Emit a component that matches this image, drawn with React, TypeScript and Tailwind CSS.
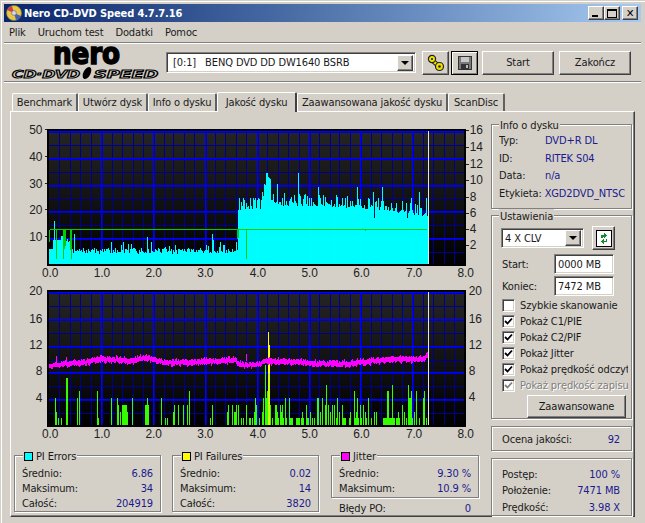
import React from 'react';

const font = "font-['DejaVu_Sans_Condensed','Liberation_Sans',Arial,sans-serif]";
const etched = 'border border-[#808080] shadow-[inset_1px_1px_0_#fff,1px_1px_0_#fff]';
const raised =
  'border border-t-white border-l-white border-r-[#404040] border-b-[#404040] shadow-[inset_-1px_-1px_0_#808080] bg-[#d4d0c8]';
const sunken =
  'border border-t-[#808080] border-l-[#808080] border-r-white border-b-white shadow-[inset_1px_1px_0_#404040,inset_-1px_-1px_0_#d4d0c8] bg-white';
const valueColor = 'text-[#1a1a8e]';

// seeded noise so the chart stays the same on every render
function makeNoise(seed: number) {
  let s = seed;
  return () => {
    s = (s * 1664525 + 1013904223) % 4294967296;
    return s / 4294967296;
  };
}

function lerp(points: number[][], x: number) {
  for (let i = 1; i < points.length; i++) {
    if (x <= points[i][0]) {
      const [x0, y0] = points[i - 1];
      const [x1, y1] = points[i];
      return y0 + ((y1 - y0) * (x - x0)) / (x1 - x0);
    }
  }
  return points[points.length - 1][1];
}

const plotLeft = 46;
const plotRight = 466;
const xAt = (v: number) => 48 + 52.2 * v;

function Grid({ id, top, bottom, step }: { id: string; top: number; bottom: number; step: number }) {
  const rows: React.ReactNode[] = [];
  for (let i = 0; top + i * step < bottom; i++) {
    const y = Math.round(top + i * step);
    rows.push(
      <line key={i} x1={plotLeft} x2={plotRight} y1={y + 0.5} y2={y + 0.5} stroke={i % 2 === 0 ? '#0000ff' : '#000090'} strokeWidth={1} />,
    );
    if (i % 2 === 0)
      rows.push(<line key={'b' + i} x1={plotLeft} x2={plotRight} y1={y + 1.5} y2={y + 1.5} stroke="#0000d0" strokeWidth={1} />);
  }
  const cols: React.ReactNode[] = [];
  for (let i = 1; i < 40; i++) {
    const x = Math.round(xAt(i * 0.2));
    cols.push(
      <line key={i} x1={x + 0.5} x2={x + 0.5} y1={top} y2={bottom} stroke={i % 5 === 0 ? '#0000ff' : '#000090'} strokeWidth={1} />,
    );
    if (i % 5 === 0)
      cols.push(<line key={'b' + i} x1={x + 1.5} x2={x + 1.5} y1={top} y2={bottom} stroke="#0000c0" strokeWidth={1} />);
  }
  return (
    <g shapeRendering="crispEdges">
      <defs>
        <linearGradient id={id} x1="0" y1="0" x2="0" y2="1">
          <stop offset="0" stopColor="#252525" />
          <stop offset="1" stopColor="#000000" />
        </linearGradient>
      </defs>
      <rect x={plotLeft} y={top - 1} width={plotRight - plotLeft + 1} height={bottom - top + 2} fill={`url(#${id})`} />
      {cols}
      {rows}
      <rect x={plotLeft} y={top - 2} width={plotRight - plotLeft + 1} height={2} fill="#000" />
      <rect x={plotLeft} y={top} width={2} height={bottom - top} fill="#000" />
      <rect x={plotRight - 1} y={top} width={2} height={bottom - top} fill="#000" />
      <rect x={plotLeft} y={bottom - 1} width={plotRight - plotLeft + 1} height={1} fill="#000" />
    </g>
  );
}

const xLabels = ['0.0', '1.0', '2.0', '3.0', '4.0', '5.0', '6.0', '7.0', '8.0'];
const xLabelPos = [49, 101, 153, 205, 258, 310, 362, 415, 467];

function XLabels({ y }: { y: number }) {
  return (
    <g fontSize={12} fill="#222" fontFamily="'Liberation Sans', Arial, sans-serif" textAnchor="middle">
      {xLabels.map((t, i) => (
        <text key={t} x={xLabelPos[i]} y={y}>
          {t}
        </text>
      ))}
    </g>
  );
}

// cyan PI errors columns, page pixels
const errorSpikes: Record<number, number> = {
  53: 16, 56: 9, 62: 12, 63: 13, 73: 11, 110: 8, 122: 8, 146: 10, 150: 8, 212: 11, 213: 9, 220: 8, 236: 8,
  243: 25, 244: 24, 246: 23, 250: 25, 254: 24, 255: 25, 258: 25, 261: 24, 298: 34, 277: 30, 282: 25, 311: 25,
  318: 29, 319: 26, 320: 25, 343: 25, 358: 29, 369: 25, 374: 27, 383: 29, 412: 25, 420: 27, 427: 25, 392: 23, 397: 23,
};

function errorsPath() {
  const rnd = makeNoise(7);
  let d = '';
  for (let x = 48; x < 430; x++) {
    let v: number;
    if (x < 52) v = 5.5;
    else if (x < 60) v = 9;
    else if (x < 65) v = 10.5;
    else if (x < 72) v = 8 - (x - 65) * 0.5 + rnd() * 2;
    else if (x < 238) v = 3.8 + rnd() * 2 + (rnd() > 0.85 ? 1.6 : 0);
    else {
      const base = lerp([[238, 21], [260, 21], [262, 24], [264, 28], [266, 31], [268, 33], [270, 32], [271, 25], [275, 23], [340, 22], [385, 21], [400, 20], [415, 19], [429, 18]], x);
      v = base + rnd() * 2.2 - 1.2 + (rnd() > 0.72 ? 3 : 0);
    }
    if (errorSpikes[x]) v = errorSpikes[x];
    if (x === 375 || x === 408) v = 17;
    d += `M${x + 0.5} ${Math.round(265 - v * 2.7)}V265`;
  }
  return d;
}

function ChartOne() {
  const leftLabels: [string, number][] = [['50', 134], ['40', 161], ['30', 188], ['20', 215], ['10', 242]];
  const rightLabels: [string, number][] = [['16', 134], ['14', 151], ['12', 168], ['10', 184], ['8', 201], ['6', 218], ['4', 234], ['2', 250]];
  return (
    <svg viewBox="11 122 479 163" width={479} height={163} className="block">
      <Grid id="bg1" top={131} bottom={266} step={13.5} />
      <path d={errorsPath()} stroke="#00ffff" strokeWidth={1} shapeRendering="crispEdges" />
      <g stroke="#00d000" strokeWidth={1} fill="none" shapeRendering="crispEdges">
        <path d="M48.5 243V230.5H428M55.5 230V260M62.5 230V260M63.5 230V250M64.5 230V247M69.5 230V251M70.5 230V260M237.5 230V240M238.5 230V239M246.5 230V260M366.5 230V232" />
      </g>
      <path d="M429.5 131V265" stroke="#e8e8e8" strokeWidth={1} shapeRendering="crispEdges" />
      <g stroke="#222" shapeRendering="crispEdges">
        {leftLabels.map(([, y]) => (
          <line key={y} x1={44} x2={46} y1={y - 4.5} y2={y - 4.5} />
        ))}
        {rightLabels.map(([, y]) => (
          <line key={y} x1={467} x2={470} y1={y - 3.5} y2={y - 3.5} />
        ))}
      </g>
      <g fontSize={12} fill="#222" fontFamily="'Liberation Sans', Arial, sans-serif">
        {leftLabels.map(([t, y]) => (
          <text key={t} x={41} y={y} textAnchor="end">
            {t}
          </text>
        ))}
        {rightLabels.map(([t, y]) => (
          <text key={t} x={471} y={y}>
            {t}
          </text>
        ))}
      </g>
      <XLabels y={278} />
    </svg>
  );
}

// green PI failures as [x, value] in page pixels
const failureBars: number[][] = [
  [54, 4], [55, 2], [57, 1], [60, 1], [65, 7], [66, 7], [76, 4], [78, 5], [96, 5], [97, 1], [110, 4], [116, 4], [117, 3], [119, 2],
  [121, 3], [122, 3], [123, 3], [124, 3], [125, 3], [126, 2], [131, 4], [144, 3], [145, 3], [146, 4], [147, 3], [160, 4], [164, 1], [166, 1],
  [173, 2], [174, 3], [178, 3], [183, 3], [187, 3], [189, 5], [210, 1], [212, 3], [227, 2], [228, 3], [232, 3], [234, 2], [235, 2], [236, 3],
  [238, 3], [241, 1], [243, 1], [246, 3], [249, 1], [250, 1], [252, 1], [254, 2], [255, 4], [256, 3], [259, 1], [262, 2], [263, 4], [265, 9],
  [266, 4], [267, 5], [268, 5], [269, 5], [270, 3], [272, 1], [275, 3], [276, 3], [277, 2], [278, 1], [280, 3], [281, 2], [282, 3], [283, 1],
  [285, 4], [286, 1], [289, 4], [290, 1], [291, 1], [292, 1], [296, 1], [297, 1], [298, 1], [299, 1], [301, 1], [302, 2], [303, 1], [306, 3],
  [307, 1], [308, 1], [310, 2], [312, 1], [314, 1], [317, 4], [318, 4], [320, 2], [322, 4], [325, 3], [326, 6], [328, 3], [330, 2], [332, 3],
  [335, 3], [337, 1], [338, 4], [340, 2], [343, 3], [344, 1], [345, 1], [346, 1], [350, 1], [351, 2], [355, 5], [356, 1], [357, 2], [358, 4],
  [359, 1], [361, 3], [362, 1], [364, 3], [366, 2], [367, 1], [369, 4], [372, 1], [375, 2], [377, 2], [384, 1], [385, 1], [386, 1], [387, 1],
  [388, 5], [389, 5], [390, 1], [391, 1], [392, 1], [393, 6], [394, 1], [395, 1], [397, 1], [398, 1], [399, 2], [400, 1], [403, 3], [405, 2],
  [407, 1], [409, 6], [410, 4], [411, 4], [412, 5], [413, 1], [415, 2], [417, 5], [420, 1], [424, 4], [425, 5], [427, 1], [429, 4],
];

function jitterPath() {
  const rnd = makeNoise(21);
  const pts = [[48, 368], [60, 365], [80, 364], [100, 360], [130, 362], [145, 359], [165, 364], [200, 363], [235, 361], [239, 366], [258, 366], [265, 362], [300, 363], [320, 365], [350, 365], [370, 362], [395, 360], [425, 360], [428, 356]];
  let d = '';
  for (let x = 48; x < 429; x++) {
    const y = lerp(pts, x) + (rnd() - 0.5) * 2;
    const up = 2 + (rnd() > 0.8 ? 2 : rnd());
    const down = 2 + (rnd() > 0.8 ? 2 : rnd());
    d += `M${x + 0.5} ${Math.round(y - up)}V${Math.round(y + down)}`;
  }
  return d + 'M55.5 357V363M65.5 358V363M246.5 355V362';
}

function ChartTwo() {
  const leftLabels: [string, number][] = [['20', 296], ['16', 324], ['12', 350], ['8', 377], ['4', 404]];
  const rightLabels: [string, number][] = [['20', 296], ['16', 324], ['12', 350], ['8', 377], ['4', 403]];
  const bars = failureBars.map(([x, v]) => `M${x + 0.5} ${Math.round(427 - v * 6.75)}V427`).join('');
  return (
    <svg viewBox="11 285 479 162" width={479} height={162} className="block">
      <Grid id="bg2" top={293} bottom={428} step={13.5} />
      <path d={bars} stroke="#33ff00" strokeWidth={1} shapeRendering="crispEdges" />
      <path d="M268.5 333V427M269.5 346V427" stroke="#ccff00" strokeWidth={1} shapeRendering="crispEdges" />
      <path d="M268.5 333V375M269.5 346V375" stroke="#ffff00" strokeWidth={1} shapeRendering="crispEdges" />
      <path d={jitterPath()} stroke="#ff00ff" strokeWidth={1} shapeRendering="crispEdges" />
      <path d="M429.5 293V427" stroke="#e8e8e8" strokeWidth={1} shapeRendering="crispEdges" />
      <g fontSize={12} fill="#222" fontFamily="'Liberation Sans', Arial, sans-serif">
        {leftLabels.map(([t, y]) => (
          <text key={t} x={41} y={y} textAnchor="end">
            {t}
          </text>
        ))}
        {rightLabels.map(([t, y]) => (
          <text key={t} x={470} y={y}>
            {t}
          </text>
        ))}
      </g>
      <XLabels y={440} />
    </svg>
  );
}

function NeroIcon() {
  return (
    <svg width="16" height="16" viewBox="0 0 16 16">
      <circle cx="8" cy="8" r="7.5" fill="#e8c840" stroke="#8a7a40" strokeWidth="0.7" />
      <path d="M8 8L1 5A7.5 7.5 0 0 1 6 1Z" fill="#d04040" />
      <path d="M8 8L15 11A7.5 7.5 0 0 1 10 15Z" fill="#4060c0" />
      <circle cx="8" cy="8" r="2.4" fill="#d8d8e8" stroke="#606080" strokeWidth="0.6" />
    </svg>
  );
}

function ChainIcon() {
  return (
    <svg width="18" height="18" viewBox="0 0 18 18">
      <path d="M5.5 6.5L12 12.5" stroke="#222" strokeWidth="4.5" />
      <path d="M5.5 6.5L12 12.5" stroke="#f2e000" strokeWidth="2.5" />
      <circle cx="5" cy="5" r="3.6" fill="#f2e000" stroke="#222" strokeWidth="1.2" />
      <circle cx="12.5" cy="12.5" r="4" fill="#f2e000" stroke="#222" strokeWidth="1.2" />
      <circle cx="5" cy="5" r="1.1" fill="#222" />
      <circle cx="12.5" cy="12.5" r="1.3" fill="#222" />
    </svg>
  );
}

function FloppyIcon() {
  return (
    <svg width="14" height="14" viewBox="0 0 14 14" shapeRendering="crispEdges">
      <rect x="0.5" y="0.5" width="13" height="13" fill="#7a7a7a" stroke="#333" />
      <rect x="3" y="1" width="8" height="5" fill="#c8c8c8" />
      <rect x="3" y="8" width="8" height="5" fill="#333" />
      <rect x="8" y="9" width="2" height="3" fill="#bbb" />
    </svg>
  );
}

function RefreshIcon() {
  return (
    <svg width="16" height="17" viewBox="0 0 16 17" shapeRendering="crispEdges">
      <rect x="0.5" y="0.5" width="15" height="16" fill="#fff" stroke="#000" />
      <path d="M5 8V5H8V3L11 5.5L8 8V6.5H6.5V8Z" fill="#109030" />
      <path d="M11 9V12H8V14L5 11.5L8 9V10.5H9.5V9Z" fill="#109030" />
    </svg>
  );
}

function ComboArrow() {
  return (
    <div className={`w-[16px] h-[16px] flex items-center justify-center ${raised}`}>
      <div className="w-0 h-0 border-x-[4px] border-x-transparent border-t-[4px] border-t-black" />
    </div>
  );
}

function WinButton({ children }: { children: React.ReactNode }) {
  return <div className={`w-[16px] h-[14px] flex items-center justify-center ${raised}`}>{children}</div>;
}

function Tab({ w, label, active }: { w: string; label: string; active?: boolean }) {
  return active ? (
    <div className={`${w} h-[20px] -mb-px z-10 relative flex items-center justify-center whitespace-nowrap bg-[#d4d0c8] border-t border-l border-white border-r-2 border-r-[#404040] rounded-t-[2px]`}>
      {label}
    </div>
  ) : (
    <div className={`${w} h-[18px] flex items-center justify-center whitespace-nowrap border-t border-l border-white border-r-2 border-r-[#606060] rounded-t-[2px]`}>
      {label}
    </div>
  );
}

function Legend({ color, label }: { color?: string; label: string }) {
  return (
    <div className={`absolute -top-[7px] ${color ? 'left-[8px]' : 'left-[7px]'} flex items-center gap-[3px] bg-[#d4d0c8] px-[1px] h-[14px]`}>
      {color === 'cyan' && <span className="w-[9px] h-[9px] border border-black bg-[#00ffff]" />}
      {color === 'yellow' && <span className="w-[9px] h-[9px] border border-black bg-[#ffff00]" />}
      {color === 'magenta' && <span className="w-[9px] h-[9px] border border-black bg-[#ff00ff]" />}
      <span>{label}</span>
    </div>
  );
}

function StatRow({ label, value }: { label: string; value: string }) {
  return (
    <div className="flex justify-between h-[15px] items-center">
      <span>{label}</span>
      <span className={valueColor}>{value}</span>
    </div>
  );
}

function InfoRow({ label, value, x }: { label: string; value: string; x: string }) {
  return (
    <div className="flex h-[17.6px] items-center overflow-hidden whitespace-nowrap">
      <span className={x}>{label}</span>
      <span className={valueColor}>{value}</span>
    </div>
  );
}

function Check({ label, checked, disabled }: { label: string; checked?: boolean; disabled?: boolean }) {
  return (
    <div className="flex items-center gap-[5px] h-[16px] whitespace-nowrap overflow-hidden">
      <div className={`w-[13px] h-[13px] shrink-0 flex items-center justify-center ${sunken} ${disabled ? 'bg-[#d4d0c8]' : ''}`}>
        {checked && (
          <svg width="9" height="9" viewBox="0 0 9 9">
            <path d="M1 4L3.5 6.5L8 1.5" fill="none" stroke={disabled ? '#808080' : '#000'} strokeWidth="1.8" />
          </svg>
        )}
      </div>
      <span className={disabled ? 'text-[#808080] [text-shadow:1px_1px_0_#fff]' : ''}>{label}</span>
    </div>
  );
}

export default function App() {
  return (
    <div className={`${font} text-[11px] leading-none tracking-[-0.12px] text-[#1a1a1a] w-[645px] h-[523px] overflow-hidden bg-[#d4d0c8] px-[4px] pt-[4px] flex flex-col shadow-[inset_1px_1px_0_#d4d0c8,inset_2px_2px_0_#fff]`}>
      {/* title bar */}
      <div className="h-[18px] shrink-0 flex items-center pl-[2px] pr-[3px] bg-gradient-to-r from-[#0a246a] to-[#a6caf0]">
        <NeroIcon />
        <span className="ml-[2px] text-white font-bold text-[11px]">Nero CD-DVD Speed 4.7.7.16</span>
        <div className="ml-auto flex items-center">
          <WinButton>
            <div className="w-[6px] h-[2px] bg-black mt-[6px] -ml-[2px]" />
          </WinButton>
          <WinButton>
            <div className="w-[10px] h-[9px] border border-black border-t-2" />
          </WinButton>
          <div className="w-[2px]" />
          <WinButton>
            <span className="font-bold text-[11px] text-black">✕</span>
          </WinButton>
        </div>
      </div>

      {/* menu */}
      <div className="h-[20px] shrink-0 flex items-center pl-[5px] gap-[12px]">
        <span>Plik</span>
        <span>Uruchom test</span>
        <span>Dodatki</span>
        <span>Pomoc</span>
      </div>
      <div className="h-[2px] shrink-0 border-t border-[#808080] border-b border-b-white" />

      {/* toolbar */}
      <div className="h-[37px] shrink-0 flex items-center">
        <svg width="152" height="37" viewBox="0 0 152 37" className="ml-[8px] shrink-0 overflow-visible">
          <text x="41" y="20" fontFamily="'DejaVu Sans', sans-serif" fontWeight="700" fontSize="30" stroke="#000" strokeWidth="1.6" textLength="67" lengthAdjust="spacingAndGlyphs">
            nero
          </text>
          <text x="0" y="34" fontFamily="'DejaVu Sans', sans-serif" fontWeight="700" fontStyle="italic" fontSize="11" fill="#d4d0c8" stroke="#000" strokeWidth="1" textLength="68" lengthAdjust="spacingAndGlyphs">
            CD·DVD
          </text>
          <ellipse cx="75" cy="29" rx="3.5" ry="6.5" transform="rotate(28 75 29)" fill="#000" />
          <text x="82" y="34" fontFamily="'DejaVu Sans', sans-serif" fontWeight="700" fontStyle="italic" fontSize="11" fill="#d4d0c8" stroke="#000" strokeWidth="1" textLength="64" lengthAdjust="spacingAndGlyphs">
            SPEED
          </text>
        </svg>
        <div className={`ml-[2px] w-[250px] h-[21px] flex items-center justify-between pl-[6px] pr-[2px] ${sunken}`}>
          <span className="whitespace-pre">[0:1]   BENQ DVD DD DW1640 BSRB</span>
          <ComboArrow />
        </div>
        <div className={`ml-[6px] w-[27px] h-[24px] flex items-center justify-center ${raised}`}>
          <ChainIcon />
        </div>
        <div className="ml-[2px] w-[27px] h-[24px] flex items-center justify-center border border-black bg-[#d4d0c8] shadow-[inset_1px_1px_0_#fff,inset_-1px_-1px_0_#808080]">
          <FloppyIcon />
        </div>
        <div className={`ml-[4px] w-[72px] h-[24px] flex items-center justify-center ${raised}`}>Start</div>
        <div className={`ml-[5px] w-[72px] h-[24px] flex items-center justify-center ${raised}`}>Zakończ</div>
      </div>
      <div className="h-[2px] shrink-0 border-t border-[#808080] border-b border-b-white" />

      {/* tabs */}
      <div className="mt-[8px] ml-[8px] h-[20px] shrink-0 flex items-end">
        <Tab w="w-[66px]" label="Benchmark" />
        <Tab w="w-[70px]" label="Utwórz dysk" />
        <Tab w="w-[69px]" label="Info o dysku" />
        <Tab w="w-[80px]" label="Jakość dysku" active />
        <Tab w="w-[151px]" label="Zaawansowana jakość dysku" />
        <Tab w="w-[57px]" label="ScanDisc" />
      </div>

      {/* tab page */}
      <div className="ml-[6px] w-[625px] h-[406px] shrink-0 flex border border-t-white border-l-white border-r-[#404040] border-b-[#404040] shadow-[inset_-1px_-1px_0_#808080]">
        <div className="w-[479px] shrink-0 flex flex-col">
          <div className="h-[10px]" />
          <ChartOne />
          <ChartTwo />
          <div className="mt-[10px] flex items-start pl-[3px]">
            <div className={`relative w-[147px] h-[57px] px-[7px] pt-[10px] ${etched}`}>
              <Legend color="cyan" label="PI Errors" />
              <StatRow label="Średnio:" value="6.86" />
              <StatRow label="Maksimum:" value="34" />
              <StatRow label="Całość:" value="204919" />
            </div>
            <div className={`relative ml-[11px] w-[147px] h-[57px] px-[7px] pt-[10px] ${etched}`}>
              <Legend color="yellow" label="PI Failures" />
              <StatRow label="Średnio:" value="0.02" />
              <StatRow label="Maksimum:" value="14" />
              <StatRow label="Całość:" value="3820" />
            </div>
            <div className="ml-[12px] w-[148px]">
              <div className={`relative h-[43px] px-[7px] pt-[10px] ${etched}`}>
                <Legend color="magenta" label="Jitter" />
                <StatRow label="Średnio:" value="9.30 %" />
                <StatRow label="Maksimum:" value="10.9 %" />
              </div>
              <div className="flex justify-between px-[8px] mt-[3px] h-[15px] items-center">
                <span>Błędy PO:</span>
                <span className={valueColor}>0</span>
              </div>
            </div>
          </div>
        </div>

        <div className="ml-[1px] w-[141px] shrink-0 flex flex-col pt-[12px]">
          <div className={`relative h-[85px] pl-[7px] pr-[6px] pt-[7px] ${etched}`}>
            <Legend label="Info o dysku" />
            <InfoRow label="Typ:" value="DVD+R DL" x="w-[46px]" />
            <InfoRow label="ID:" value="RITEK S04" x="w-[46px]" />
            <InfoRow label="Data:" value="n/a" x="w-[46px]" />
            <InfoRow label="Etykieta:" value="XGD2DVD_NTSC" x="w-[46px]" />
          </div>
          <div className={`relative mt-[6px] h-[204px] pl-[10px] pr-[3px] pt-[10px] ${etched}`}>
            <Legend label="Ustawienia" />
            <div className="flex items-center -ml-[1px]">
              <div className={`w-[83px] h-[20px] flex items-center justify-between pl-[3px] pr-[2px] ${sunken}`}>
                <span>4 X CLV</span>
                <ComboArrow />
              </div>
              <div className={`ml-[8px] w-[23px] h-[24px] flex items-center justify-center ${raised}`}>
                <RefreshIcon />
              </div>
            </div>
            <div className="mt-[4px] flex items-center h-[20px]">
              <span className="w-[52px]">Start:</span>
              <div className={`w-[60px] h-[20px] flex items-center pl-[3px] ${sunken}`}>0000 MB</div>
            </div>
            <div className="mt-[2px] flex items-center h-[20px]">
              <span className="w-[52px]">Koniec:</span>
              <div className={`w-[60px] h-[20px] flex items-center pl-[3px] ${sunken}`}>7472 MB</div>
            </div>
            <div className="mt-[1px]">
              <Check label="Szybkie skanowanie" />
            </div>
            <Check label="Pokaż C1/PIE" checked />
            <Check label="Pokaż C2/PIF" checked />
            <Check label="Pokaż Jitter" checked />
            <Check label="Pokaż prędkość odczytu" checked />
            <Check label="Pokaż prędkość zapisu" checked disabled />
            <div className={`mt-[2px] ml-[25px] w-[99px] h-[23px] flex items-center justify-center ${raised}`}>Zaawansowane</div>
          </div>
          <div className={`mt-[7px] h-[25px] flex items-center justify-between pl-[10px] pr-[11px] pt-[1px] ${etched}`}>
            <span>Ocena jakości:</span>
            <span className={valueColor}>92</span>
          </div>
          <div className={`mt-[7px] h-[58px] pl-[10px] pr-[11px] pt-[7px] ${etched}`}>
            <div className="flex justify-between h-[16.5px] items-center">
              <span>Postęp:</span>
              <span className={valueColor}>100 %</span>
            </div>
            <div className="flex justify-between h-[16.5px] items-center">
              <span>Położenie:</span>
              <span className={valueColor}>7471 MB</span>
            </div>
            <div className="flex justify-between h-[16.5px] items-center">
              <span>Prędkość:</span>
              <span className={valueColor}>3.98 X</span>
            </div>
          </div>
        </div>
      </div>
    </div>
  );
}
